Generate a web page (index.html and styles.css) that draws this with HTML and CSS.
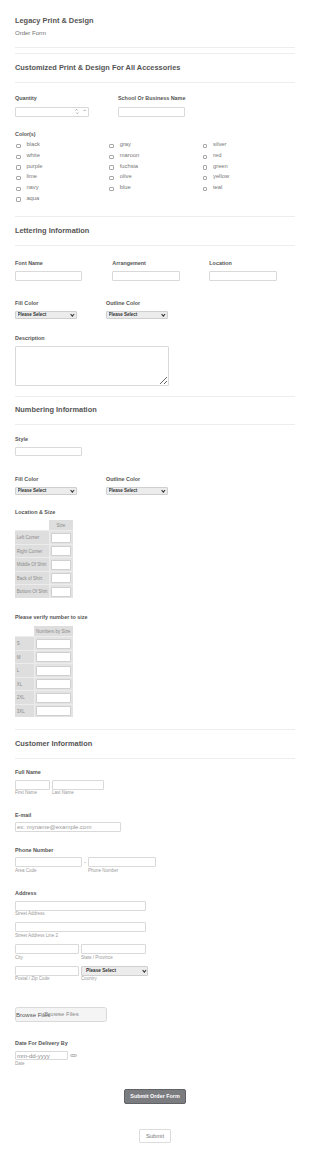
FILE: index.html
```html
<!DOCTYPE html>
<html lang="en">
<head>
<meta charset="utf-8">
<title>Legacy Print &amp; Design - Order Form</title>
<link rel="stylesheet" href="styles.css">
</head>
<body>
<form class="form">
  <header class="form-header">
    <h1 class="title">Legacy Print &amp; Design</h1>
    <p class="subtitle">Order Form</p>
  </header>

  <div class="section-head sh-1"><h2 class="section-title">Customized Print &amp; Design For All Accessories</h2></div>

  <div class="row-qty">
    <div class="field">
      <label class="label">Quantity</label>
      <div class="num-input ctrl">
        <input class="num-field" type="text">
        <svg class="spin" viewBox="0 0 12 8" width="12" height="8" aria-hidden="true">
          <polyline points="0.6,2.4 1.6,1.3 2.6,2.4" fill="none" stroke="#777" stroke-width="0.6"/>
          <polyline points="1.3,4.6 2.3,5.7 3.3,4.6" fill="none" stroke="#777" stroke-width="0.6"/>
          <polyline points="8.6,3 9.6,1.9 10.6,3" fill="none" stroke="#777" stroke-width="0.6"/>
        </svg>
      </div>
    </div>
    <div class="field">
      <label class="label">School Or Business Name</label>
      <input class="input ctrl w-67" type="text">
    </div>
  </div>

  <div class="field field-colors">
    <label class="label">Color(s)</label>
    <div class="checks">
      <label class="check"><input type="checkbox"><span>black</span></label>
      <label class="check"><input type="checkbox"><span>gray</span></label>
      <label class="check"><input type="checkbox"><span>silver</span></label>
      <label class="check"><input type="checkbox"><span>white</span></label>
      <label class="check"><input type="checkbox"><span>maroon</span></label>
      <label class="check"><input type="checkbox"><span>red</span></label>
      <label class="check"><input type="checkbox"><span>purple</span></label>
      <label class="check"><input type="checkbox"><span>fuchsia</span></label>
      <label class="check"><input type="checkbox"><span>green</span></label>
      <label class="check"><input type="checkbox"><span>lime</span></label>
      <label class="check"><input type="checkbox"><span>olive</span></label>
      <label class="check"><input type="checkbox"><span>yellow</span></label>
      <label class="check"><input type="checkbox"><span>navy</span></label>
      <label class="check"><input type="checkbox"><span>blue</span></label>
      <label class="check"><input type="checkbox"><span>teal</span></label>
      <label class="check"><input type="checkbox"><span>aqua</span></label>
    </div>
  </div>

  <div class="section-head sh-2"><h2 class="section-title">Lettering Information</h2></div>

  <div class="row-3">
    <div class="field">
      <label class="label">Font Name</label>
      <input class="input ctrl w-67" type="text">
    </div>
    <div class="field">
      <label class="label">Arrangement</label>
      <input class="input ctrl w-68" type="text">
    </div>
    <div class="field">
      <label class="label">Location</label>
      <input class="input ctrl w-68" type="text">
    </div>
  </div>

  <div class="row-2 row-fill-1">
    <div class="field">
      <label class="label">Fill Color</label>
      <div class="select ctrl"><select><option>Please Select</option></select></div>
    </div>
    <div class="field">
      <label class="label">Outline Color</label>
      <div class="select ctrl"><select><option>Please Select</option></select></div>
    </div>
  </div>

  <div class="field field-desc">
    <label class="label">Description</label>
    <textarea class="textarea"></textarea>
  </div>

  <div class="section-head sh-3"><h2 class="section-title">Numbering Information</h2></div>

  <div class="field field-style">
    <label class="label">Style</label>
    <input class="input ctrl w-67" type="text">
  </div>

  <div class="row-2 row-fill-2">
    <div class="field">
      <label class="label">Fill Color</label>
      <div class="select ctrl"><select><option>Please Select</option></select></div>
    </div>
    <div class="field">
      <label class="label">Outline Color</label>
      <div class="select ctrl"><select><option>Please Select</option></select></div>
    </div>
  </div>

  <div class="field field-loc">
    <label class="label">Location &amp; Size</label>
    <div class="matrix matrix-loc">
      <div class="mx-corner"></div><div class="mx-head">Size</div>
      <div class="mx-label">Left Corner</div><div class="mx-cell"><input type="text"></div>
      <div class="mx-label">Right Corner</div><div class="mx-cell"><input type="text"></div>
      <div class="mx-label">Middle Of Shirt</div><div class="mx-cell"><input type="text"></div>
      <div class="mx-label">Back of Shirt</div><div class="mx-cell"><input type="text"></div>
      <div class="mx-label">Bottom Of Shirt</div><div class="mx-cell"><input type="text"></div>
    </div>
  </div>

  <div class="field field-verify">
    <label class="label">Please verify number to size</label>
    <div class="matrix matrix-size">
      <div class="mx-corner"></div><div class="mx-head">Numbers by Size</div>
      <div class="mx-label">S</div><div class="mx-cell"><input type="text"></div>
      <div class="mx-label">M</div><div class="mx-cell"><input type="text"></div>
      <div class="mx-label">L</div><div class="mx-cell"><input type="text"></div>
      <div class="mx-label">XL</div><div class="mx-cell"><input type="text"></div>
      <div class="mx-label">2XL</div><div class="mx-cell"><input type="text"></div>
      <div class="mx-label">3XL</div><div class="mx-cell"><input type="text"></div>
    </div>
  </div>

  <div class="section-head sh-4"><h2 class="section-title">Customer Information</h2></div>

  <div class="field field-name">
    <label class="label">Full Name</label>
    <div class="combo">
      <div class="part"><input class="input w-35" type="text"><span class="sublabel">First Name</span></div>
      <div class="part"><input class="input w-52" type="text"><span class="sublabel">Last Name</span></div>
    </div>
  </div>

  <div class="field field-email">
    <label class="label">E-mail</label>
    <input class="input ctrl w-106" type="email" placeholder="ex: myname@example.com">
  </div>

  <div class="field field-phone">
    <label class="label">Phone Number</label>
    <div class="combo combo-phone">
      <div class="part"><input class="input w-67" type="text"><span class="sublabel">Area Code</span></div>
      <span class="dash">-</span>
      <div class="part"><input class="input w-68" type="text"><span class="sublabel">Phone Number</span></div>
    </div>
  </div>

  <div class="field field-address">
    <label class="label">Address</label>
    <div class="addr-line addr-1">
      <input class="input w-131" type="text"><span class="sublabel">Street Address</span>
    </div>
    <div class="addr-line addr-2">
      <input class="input w-131" type="text"><span class="sublabel">Street Address Line 2</span>
    </div>
    <div class="combo addr-city">
      <div class="part"><input class="input w-64 h-95" type="text"><span class="sublabel">City</span></div>
      <div class="part"><input class="input w-65 h-95" type="text"><span class="sublabel">State / Province</span></div>
    </div>
    <div class="combo addr-zip">
      <div class="part"><input class="input w-64" type="text"><span class="sublabel">Postal / Zip Code</span></div>
      <div class="part">
        <div class="select select-country"><select><option>Please Select</option></select></div>
        <span class="sublabel">Country</span>
      </div>
    </div>
  </div>

  <label class="upload"><span class="upload-text">Browse Files</span><span class="upload-text upload-ghost">Browse Files</span></label>

  <div class="field field-date">
    <label class="label">Date For Delivery By</label>
    <div class="date-row">
      <input class="input w-53 h-95 date-input" type="text" placeholder="mm-dd-yyyy">
      <span class="date-icon" aria-hidden="true"></span>
    </div>
    <span class="sublabel date-sub">Date</span>
  </div>

  <div class="actions">
    <button type="button" class="btn-primary">Submit Order Form</button>
  </div>
  <div class="actions actions-2">
    <button type="button" class="btn-secondary">Submit</button>
  </div>
</form>
</body>
</html>
```

FILE: styles.css
```css
* { box-sizing: border-box; margin: 0; padding: 0; }
html, body { background: #fff; }
body { font-family: "Liberation Sans", Arial, Helvetica, sans-serif; color: #555; }

.form { width: 310px; padding: 15.6px 15px 20px; }

/* header */
.title { font-size: 7.4px; line-height: 9px; font-weight: 700; color: #555; }
.subtitle { margin-top: 4px; font-size: 6px; line-height: 8px; font-weight: 400; color: #6e6e6e; }
.form-header { padding-bottom: 10.5px; border-bottom: 1px solid #ededed; }

/* section heads */
.section-head { padding: 8.6px 0 10px; border-top: 1px solid #ededed; border-bottom: 1px solid #ededed; }
.section-title { font-size: 7.4px; line-height: 9px; font-weight: 700; color: #555; }
.sh-1 { margin-top: 5px; }
.sh-2 { margin-top: 12.8px; }
.sh-3 { margin-top: 10px; }
.sh-4 { margin-top: 12px; }

/* labels */
.label { display: block; font-size: 5.4px; line-height: 7px; font-weight: 700; color: #555; }
.sublabel { display: block; font-size: 4.5px; line-height: 6px; color: #9a9a9a; white-space: nowrap; }

/* inputs */
.input {
  display: block; height: 10px; border: 1px solid #d9d9d9; border-radius: 1px; background: #fff;
  font: 6px/8px "Liberation Sans", Arial, sans-serif; color: #555; padding: 0 1px; outline: none;
}
.input::placeholder { color: #9a9a9a; }
.w-35 { width: 35px; }
.w-52 { width: 52px; }
.w-53 { width: 53px; }
.w-64 { width: 64px; }
.w-65 { width: 65px; }
.w-67 { width: 67px; }
.w-68 { width: 68px; }
.w-106 { width: 106px; }
.w-131 { width: 131px; }
.h-95 { height: 9.5px; }

/* quantity row */
.row-qty { display: grid; grid-template-columns: 103px auto; margin-top: 12.6px; }
.row-qty .ctrl { margin-top: 4.7px; }
.num-input {
  display: flex; align-items: center; width: 74px; height: 10px;
  border: 1px solid #d9d9d9; border-radius: 1px; background: #fff; padding-right: 1.5px;
}
.num-field { flex: 1; min-width: 0; height: 100%; border: 0; outline: none; background: transparent; }
.spin { display: block; flex: none; width: 12px; height: 8px; }

/* colors */
.field-colors { margin-top: 14.3px; }
.checks { display: grid; grid-template-columns: repeat(3, 93.3px); grid-auto-rows: 10.67px; margin-top: 1.1px; }
.check { display: flex; align-items: flex-start; font-size: 5.8px; line-height: 10.67px; color: #777; white-space: nowrap; }
.check input {
  -webkit-appearance: none; appearance: none; flex: none;
  width: 4.6px; height: 4.4px; margin: 4.6px 5.8px 0 1px;
  border: 0.8px solid #a8a8a8; border-radius: 1px; background: #fff;
}

/* lettering */
.row-3 { display: grid; grid-template-columns: 97.3px 97px auto; margin-top: 14.8px; }
.row-3 .ctrl { margin-top: 3.9px; height: 9.5px; }
.row-2 { display: grid; grid-template-columns: 91px auto; }
.row-fill-1 { margin-top: 19.3px; }
.row-fill-1 .ctrl { margin-top: 4px; }
.row-fill-2 { margin-top: 20.6px; }
.row-fill-2 .ctrl { margin-top: 3.4px; }

/* selects */
.select { position: relative; width: 62px; height: 8px; }
.select select {
  -webkit-appearance: none; appearance: none; display: block; width: 100%; height: 100%;
  border: 1px solid #cfcfcf; border-radius: 1px; background: #ececec;
  font: 700 4.5px/6px "Liberation Sans", Arial, sans-serif; color: #333; padding: 0 0 0 1.5px; outline: none;
}
.select::after {
  content: ""; position: absolute; right: 3.2px; top: 2.1px; width: 1.7px; height: 1.7px;
  border-right: 0.8px solid #333; border-bottom: 0.8px solid #333; transform: rotate(45deg); pointer-events: none;
}
.select-country { width: 67px; height: 9.7px; }
.select-country select { font-size: 4.7px; padding-left: 4px; }
.select-country::after { right: 2.6px; top: 2.7px; }

/* description */
.field-desc { margin-top: 15.7px; }
.textarea {
  display: block; margin-top: 3.7px; width: 154px; height: 40px;
  border: 1px solid #d9d9d9; border-radius: 1px; background: #fff; outline: none;
  font: 6px/8px "Liberation Sans", Arial, sans-serif;
}

/* numbering */
.field-style { margin-top: 11px; }
.field-style .ctrl { margin-top: 3.4px; height: 9px; }

.field-loc { margin-top: 14.9px; }
.field-loc .matrix { margin-top: 3.4px; }
.field-verify { margin-top: 16.4px; }
.field-verify .matrix { margin-top: 4.4px; }

.matrix { display: grid; grid-template-rows: 10.7px; grid-auto-rows: 13.5px; width: max-content; }
.matrix-loc { grid-template-columns: 34.3px 23.4px; }
.matrix-size { grid-template-columns: 18.7px 39px; }
.mx-head {
  background: #dedede; font-size: 4.5px; color: #8a8a8a; white-space: nowrap;
  display: flex; align-items: center; justify-content: center;
}
.mx-label {
  background: #dedede; border-top: 1px solid #ececec; font-size: 4.5px; color: #8a8a8a; white-space: nowrap;
  display: flex; align-items: center; padding-left: 1.7px;
}
.mx-cell {
  background: #e3e3e3; border-top: 1px solid #ececec; border-left: 1px solid #ececec;
  display: flex; align-items: center; justify-content: center;
}
.mx-cell input { display: block; height: 10px; border: 1px solid #d0d0d0; border-radius: 1px; background: #fff; outline: none; }
.matrix-loc .mx-cell input { width: 20px; }
.matrix-size .mx-cell input { width: 35px; }

/* customer */
.combo { display: flex; gap: 2px; }
.field-name { margin-top: 9.7px; }
.field-name .combo { margin-top: 4px; }

.field-email { margin-top: 16.6px; }
.field-email .ctrl { margin-top: 3px; }

.field-phone { margin-top: 14.7px; }
.combo-phone { gap: 0; margin-top: 3.3px; }
.combo-phone .sublabel { margin-top: 0.7px; }
.dash { width: 6px; font-size: 6px; line-height: 10px; text-align: center; color: #777; }

.field-address { margin-top: 16px; }
.addr-1 { margin-top: 3.7px; }
.addr-1 .sublabel { margin-top: 0.3px; }
.addr-2 { margin-top: 5.3px; }
.addr-2 .sublabel { margin-top: 0.4px; }
.addr-city { margin-top: 5.6px; }
.addr-city .sublabel { margin-top: 0.9px; }
.addr-zip { margin-top: 5.3px; }

/* upload */
.upload {
  display: flex; align-items: flex-start; margin-top: 25px; width: 92px; height: 15px;
  border: 1px solid #d9d9d9; border-radius: 2.5px; background: #f4f4f4; overflow: hidden;
}
.upload-text { font-size: 6px; line-height: 8px; color: #555; white-space: nowrap; margin-top: 3.5px; }
.upload-ghost { position: relative; margin-left: -6px; margin-top: 1.9px; color: #888; }

/* date */
.field-date { margin-top: 18.3px; }
.date-row { display: flex; align-items: center; margin-top: 3.7px; }
.date-input { font-size: 6px; }
.date-input::placeholder { color: #888; }
.date-icon { width: 6.8px; height: 2.6px; margin-left: 2px; border: 0.7px solid #bdbdbd; border-radius: 1.5px; background: #e2e2e2; }
.date-sub { margin-top: 0.9px; }

/* actions */
.actions { display: flex; justify-content: center; margin-top: 21.2px; }
.actions-2 { margin-top: 25px; }
.btn-primary {
  width: 62.7px; height: 15px; border: 1px solid #626366; border-radius: 2px; background: #7b7c7f;
  font: 700 5.4px/13px "Liberation Sans", Arial, sans-serif; color: #fff; text-align: center; white-space: nowrap;
}
.btn-secondary {
  width: 31.4px; height: 14.4px; border: 1px solid #dcdcdc; border-radius: 1px; background: #fff;
  font: 400 5.8px/12px "Liberation Sans", Arial, sans-serif; color: #777; text-align: center;
}
```
